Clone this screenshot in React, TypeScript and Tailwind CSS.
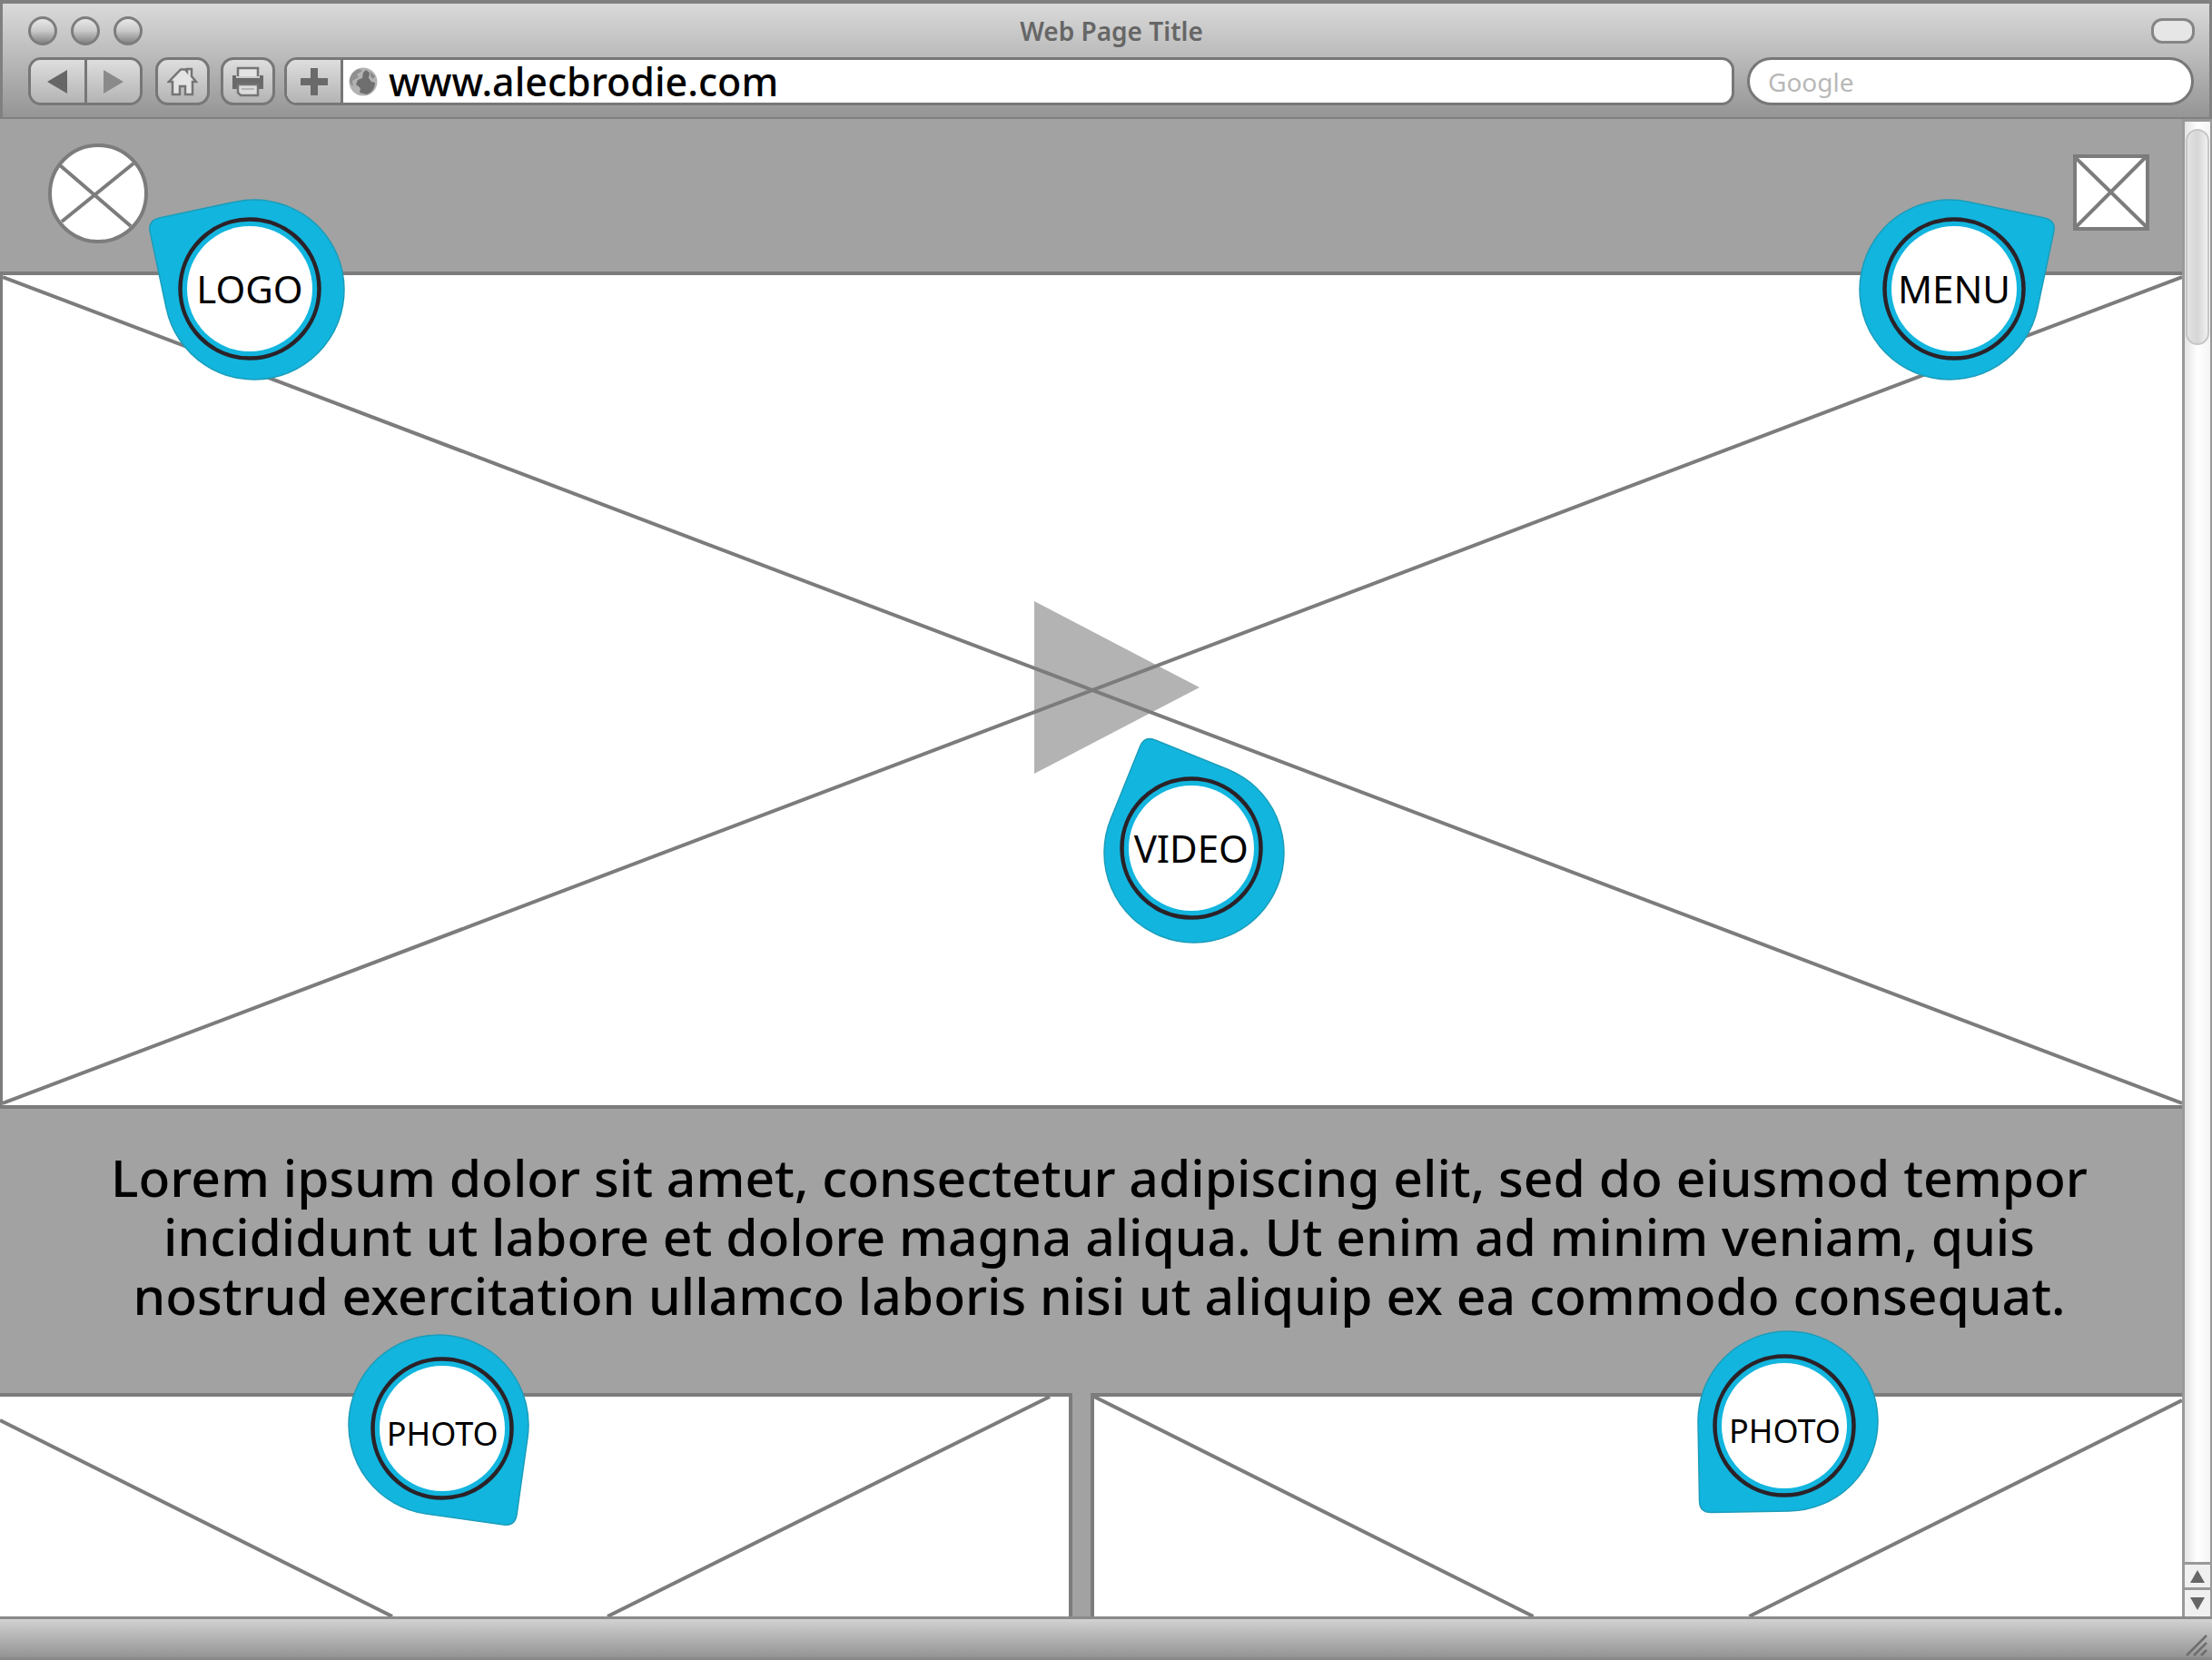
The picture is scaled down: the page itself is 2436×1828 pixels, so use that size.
import React from "react";

type PinProps = {
  label: string;
  place: string;
  rotate: number;
  dx: number;
  dy: number;
  text?: string;
};

/* Teardrop marker; its box is centred on the white disc, the body is shifted by dx/dy. */
function Pin({ label, place, rotate, dx, dy, text = "text-[42px]" }: PinProps) {
  return (
    <div className={`absolute z-10 flex h-40 w-40 items-center justify-center ${place}`}>
      <svg viewBox="-80 -80 160 160" className="absolute inset-0 h-full w-full overflow-visible" aria-hidden="true">
        <g transform={`translate(${dx} ${dy}) rotate(${rotate})`}>
          <path
            d="M0 -99H-86Q-99 -99 -99 -86V0A99 99 0 1 0 0 -99Z"
            fill="#12b5de"
            stroke="#1b9dba"
            strokeWidth="1.5"
          />
        </g>
        <circle r="76.500" fill="none" stroke="#2b2228" strokeWidth="4.500" />
        <circle r="69" fill="#fff" />
      </svg>
      <span className={`relative leading-none text-black ${text}`}>{label}</span>
    </div>
  );
}

function Lines({ width, height, d }: { width: number; height: number; d: string }) {
  return (
    <svg
      viewBox={`0 0 ${width} ${height}`}
      preserveAspectRatio="none"
      className="absolute inset-0 h-full w-full"
      aria-hidden="true"
    >
      <path d={d} fill="none" stroke="#7c7c7c" strokeWidth="4" vectorEffect="non-scaling-stroke" />
    </svg>
  );
}

const toolButton =
  "flex h-full items-center justify-center bg-linear-to-b from-[#dedede] to-[#b4b4b4] text-[#6e6e6e]";

function Toolbar() {
  return (
    <div className="flex h-[53px] items-stretch pr-[17px] pl-7">
      <div className="flex w-[126px] overflow-hidden rounded-[14px] border-3 border-[#777]">
        <button aria-label="Back" className={`${toolButton} flex-1 border-r-3 border-[#777]`}>
          <svg viewBox="0 0 22 26" className="h-[26px] w-[22px]">
            <path d="M22 0V26L0 13Z" fill="#666" />
          </svg>
        </button>
        <button aria-label="Forward" className={`${toolButton} flex-1`}>
          <svg viewBox="0 0 22 26" className="h-[26px] w-[22px]">
            <path d="M0 0V26L22 13Z" fill="#8a8a8a" />
          </svg>
        </button>
      </div>
      <button aria-label="Home" className={`${toolButton} ml-[14px] w-[60px] rounded-[14px] border-3 border-[#777]`}>
        <svg viewBox="0 0 34 32" className="h-8 w-[34px]" fill="#e4e4e4" stroke="#757575" strokeWidth="2.500">
          <path d="M6 16H2L15 2.500H20L22 5V2H27V10L32 16H28V30H20V21H14V30H6Z" />
        </svg>
      </button>
      <button aria-label="Print" className={`${toolButton} ml-3 w-[60px] rounded-[14px] border-3 border-[#777]`}>
        <svg viewBox="0 0 36 34" className="h-[34px] w-9">
          <path d="M7 11V2H29V11" fill="#e4e4e4" stroke="#757575" strokeWidth="2.500" />
          <path d="M1 10H5V13H31V10H35V25H30V19H6V25H1Z" fill="#6a6a6a" />
          <path d="M2 15H34V18H2Z" fill="#6a6a6a" />
          <path d="M7 20H29V32H10L7 29Z" fill="#dcdcdc" stroke="#757575" strokeWidth="2.500" />
          <path d="M11 25H25" stroke="#b5b5b5" strokeWidth="2" />
        </svg>
      </button>
      <div className="ml-[10px] flex min-w-0 flex-1 overflow-hidden rounded-[14px] border-3 border-[#777] bg-white">
        <button aria-label="Add bookmark" className={`${toolButton} w-[62px] border-r-3 border-[#777]`}>
          <svg viewBox="0 0 30 30" className="h-[30px] w-[30px]">
            <path d="M11 0H19V11H30V19H19V30H11V19H0V11H11Z" fill="#6a6a6a" />
          </svg>
        </button>
        <svg viewBox="0 0 32 32" className="ml-[6px] h-8 w-8 self-center" aria-hidden="true">
          <circle cx="16" cy="16" r="15.500" fill="#b2b2b2" />
          <path d="M1 14Q3 5 11 2L15 4L9 8L11 11L4 15L5 21Q1 19 1 14Z" fill="#909090" />
          <path d="M19 3L23 6L22 12L25 16L29 17Q29 26 20 30L12 28L13 23L8 19L10 14L15 12L16 6Z" fill="#6e6e6e" />
          <path d="M24 5L29 10L27 13L24 10Z" fill="#888" />
        </svg>
        <input
          aria-label="Address"
          defaultValue="www.alecbrodie.com"
          className="ml-3 min-w-0 flex-1 bg-transparent text-[43px] leading-none font-medium text-black outline-none"
        />
      </div>
      <input
        aria-label="Search"
        placeholder="Google"
        className="ml-[14px] w-[492px] rounded-full border-3 border-[#777] bg-white px-5 text-[28px] leading-none outline-none placeholder:text-[#b8b8b8]"
      />
    </div>
  );
}

function TopBar() {
  return (
    <header className="border-x-3 border-t-4 border-b-2 border-[#808080] bg-linear-to-b from-[#dadada] via-[#b8b8b8] via-50% to-[#959595] pb-[13px]">
      <div className="flex h-[59px] items-center justify-between pr-4 pl-7">
        <div className="flex w-40 gap-[15px]">
          {["Close", "Minimise", "Zoom"].map((name) => (
            <button
              key={name}
              aria-label={name}
              className="h-8 w-8 rounded-full border-3 border-[#7d7d7d] bg-linear-to-b from-[#e8e8e8] via-[#c9c9c9] to-[#868686]"
            />
          ))}
        </div>
        <h1 className="text-[28px] leading-none font-semibold text-[#666]">Web Page Title</h1>
        <div className="flex w-40 justify-end">
          <button aria-label="Toggle toolbar" className="h-7 w-12 rounded-[12px] border-3 border-[#858585] bg-[#e6e6e6]" />
        </div>
      </div>
      <Toolbar />
    </header>
  );
}

function ScrollBar() {
  return (
    <div className="flex w-[33px] shrink-0 flex-col border-t-3 border-r-2 border-l-3 border-[#999] bg-linear-to-r from-[#e4e4e4] via-white to-[#f4f4f4]">
      <div className="mx-[1px] mt-2 h-[238px] rounded-full border-2 border-[#c6c6c6] bg-linear-to-r from-[#e2e2e2] via-[#d6d6d6] to-[#f0f0f0]" />
      <div className="flex-1" />
      <button aria-label="Scroll up" className="flex h-7 items-center justify-center border-t-3 border-[#999] bg-[#f0f0f0]">
        <svg viewBox="0 0 16 14" className="h-[14px] w-4">
          <path d="M8 0L16 14H0Z" fill="#666" />
        </svg>
      </button>
      <button aria-label="Scroll down" className="flex h-8 items-center justify-center border-t-3 border-[#999] bg-[#f0f0f0]">
        <svg viewBox="0 0 16 14" className="h-[14px] w-4">
          <path d="M8 14L16 0H0Z" fill="#666" />
        </svg>
      </button>
    </div>
  );
}

export default function App() {
  return (
    <div className="flex min-h-screen flex-col bg-[#a2a2a2] font-['Noto_Sans',sans-serif]">
      <TopBar />
      <div className="flex flex-1">
        <main className="flex min-w-0 flex-1 flex-col">
          <nav className="relative flex h-[168px] items-start justify-between pr-9 pl-[53px]">
            <a href="#logo" aria-label="Logo" className="mt-[27px]">
              <svg viewBox="0 0 110 110" className="h-[110px] w-[110px]">
                <circle cx="55" cy="55" r="53" fill="#fff" stroke="#7c7c7c" strokeWidth="4" />
                <path d="M13 24L91 91M94 22L15 86" stroke="#7c7c7c" strokeWidth="4" />
              </svg>
            </a>
            <button aria-label="Menu" className="mt-[39px]">
              <svg viewBox="0 0 84 84" className="h-[84px] w-[84px]">
                <path d="M2 2H82V82H2Z" fill="#fff" stroke="#7c7c7c" strokeWidth="4" />
                <path d="M3 4L81 80M80 3L3 80" stroke="#7c7c7c" strokeWidth="4" />
              </svg>
            </button>
            <Pin label="LOGO" place="top-[107px] left-[195px]" rotate={-12} dx={5} dy={1} />
            <Pin label="MENU" place="top-[107px] right-[171px]" rotate={102} dx={-5} dy={1} />
          </nav>

          <section aria-label="Video" className="relative min-h-[600px] flex-1 border-y-4 border-l-3 border-[#7c7c7c] bg-white">
            <svg
              viewBox="0 0 182 190"
              className="absolute top-[39.300%] left-[47.350%] h-[190px] w-[182px]"
              aria-hidden="true"
            >
              <path d="M0 0V190L182 95Z" fill="#b3b3b3" />
            </svg>
            <Lines width={2400} height={914} d="M0 2L2400 912M2400 2L0 912" />
            <Pin label="VIDEO" place="top-[60.300%] left-[51.200%]" rotate={22} dx={3} dy={5} />
          </section>

          <p className="pt-[43px] pb-[75px] pl-[18px] text-center text-[57px] leading-[65px] font-medium text-black">
            Lorem ipsum dolor sit amet, consectetur adipiscing elit, sed do eiusmod tempor
            <br />
            incididunt ut labore et dolore magna aliqua. Ut enim ad minim veniam, quis
            <br />
            nostrud exercitation ullamco laboris nisi ut aliquip ex ea commodo consequat.
          </p>

          <section aria-label="Photos" className="flex h-[246px] gap-5">
            <div className="relative w-[49.150%] border-t-4 border-r-4 border-[#7c7c7c] bg-white">
              <Lines width={1177} height={242} d="M0 26L432 242M1156 0L669 242" />
              <Pin label="PHOTO" place="-top-[45px] left-[34.600%]" rotate={188} dx={-4} dy={-4} text="pt-3 text-4xl" />
            </div>
            <div className="relative flex-1 border-t-4 border-l-4 border-[#7c7c7c] bg-white">
              <Lines width={1199} height={242} d="M0 0L484 242M1199 4L722 242" />
              <Pin label="PHOTO" place="-top-[48px] left-[56.800%]" rotate={269} dx={4} dy={-5} text="pt-3 text-4xl" />
            </div>
          </section>
        </main>
        <ScrollBar />
      </div>
      <footer className="flex h-12 items-end justify-end border-y-3 border-[#8a8a8a] bg-linear-to-b from-[#d2d2d2] to-[#949494] pr-1">
        <svg viewBox="0 0 26 26" className="h-[26px] w-[26px]" aria-hidden="true">
          <path d="M2 24L24 2M10 24L24 10M18 24L24 18" stroke="#6e6e6e" strokeWidth="2.500" />
        </svg>
      </footer>
    </div>
  );
}
